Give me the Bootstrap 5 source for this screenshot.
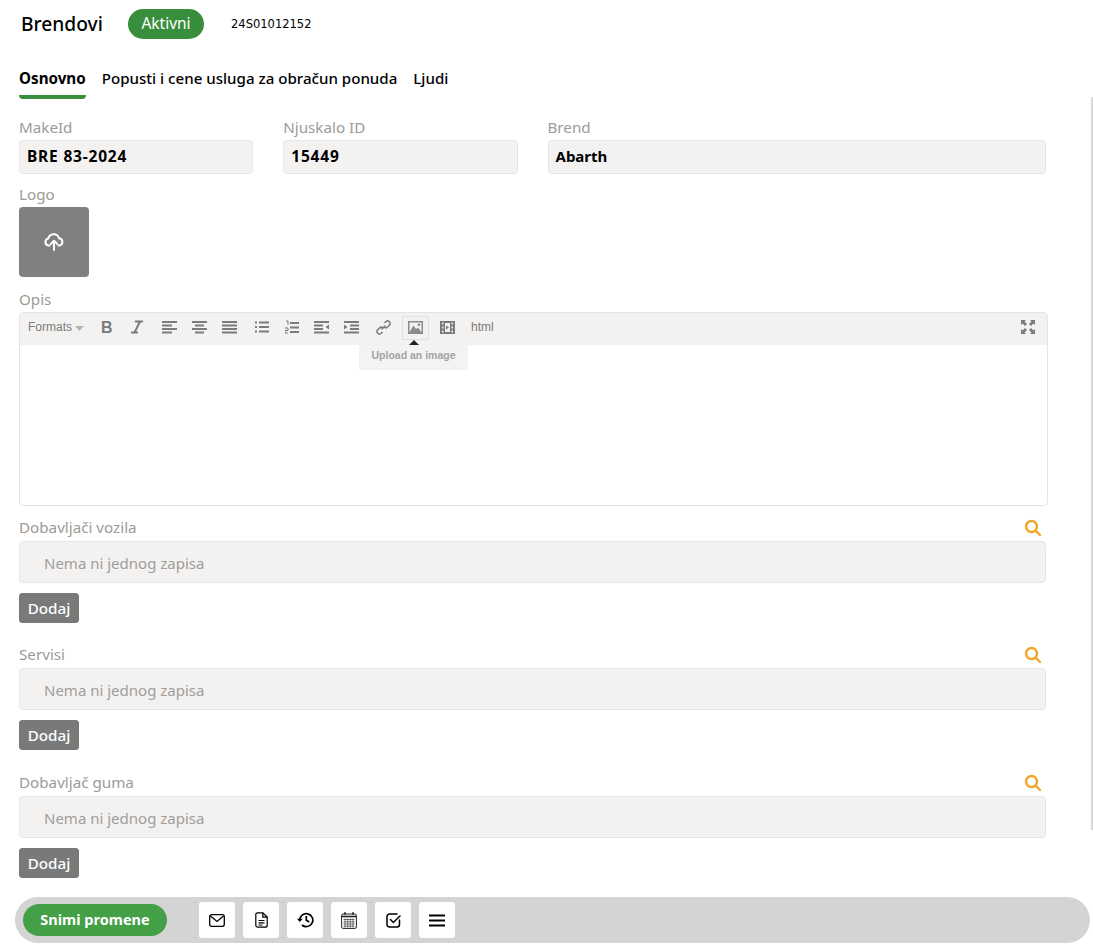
<!DOCTYPE html>
<html lang="hr"><head><meta charset="utf-8"><title>Brendovi</title>
<link rel="stylesheet" href="https://cdn.jsdelivr.net/npm/bootstrap@5.3.0/dist/css/bootstrap.min.css">
<style>
html,body{height:100%}
body{font-family:"Noto Sans","Open Sans",sans-serif;color:#000;overflow:hidden;background:#fff}
.shell{width:1093px;height:948px;position:relative}
.head{height:59px;padding:9px 0 0 21px;display:flex;align-items:flex-start}
.head-title{font-size:19.200px;line-height:29px;font-weight:500;width:107px}
.state{background:#388e3c;color:#fff;height:30px;width:76px;border-radius:15px;font-size:15.500px;line-height:29px;text-align:center}
.code{font-family:"DejaVu Sans",sans-serif;font-size:11.500px;line-height:30px;margin-left:27px}
.tabs-row{display:flex;gap:16px;padding-left:19px;height:40px}
.tab-item{font-size:15.100px;line-height:22px;padding-top:8px;font-weight:500;color:#000;text-decoration:none;height:40px}
.tab-item.on{font-size:15.200px;font-weight:700;border-bottom:4px solid #388e3c;border-radius:0 0 4px 4px}
.scroller{position:absolute;left:1091px;top:97px;width:3px;height:733px;background:#d8d8d8}
.form-area{padding:18px 0 0 4px;width:1061px}
.fields{--bs-gutter-x:30px;--bs-gutter-y:0;margin:0;width:1057px}
.lbl{color:#9d9a97;font-size:15.200px;line-height:20px;height:23px;display:block;font-weight:400}
.val{background:#f3f2f1;border:1px solid #e8e6e4;border-radius:4px;height:34px;font-weight:700;font-size:15.500px;line-height:31px;padding:0 7px;letter-spacing:.8px}
.val.val-name{font-size:15px;letter-spacing:0}
.block{margin-left:15px}
.gap-logo{margin-top:10px}
.gap-opis{margin-top:12px}
.gap-a{margin-top:9px}
.gap-b{margin-top:19px}
.gap-c{margin-top:20px}
.logo-box{width:70px;height:70px;background:#808080;border-radius:4px;display:flex;align-items:center;justify-content:center}
.editor{width:1029px;height:194px;border:1px solid #e6e4e2;border-radius:4px;position:relative}
.tbar{height:32px;background:#f3f2f1;display:flex;align-items:center;font-family:"Liberation Sans",sans-serif;font-size:12px;color:#7b7b7b;position:relative}
.tbar svg{position:absolute;top:7px;left:0}
.tbar span{position:absolute;top:7px;line-height:14px}
.tbar .bold-b{left:81px;top:6px;font-size:16px;font-weight:700;line-height:18px}
.img-on{position:absolute;left:382px;top:3px;width:27px;height:24px;border:1px solid #e0dfde;border-radius:2px}
.tipbox{position:absolute;left:339px;top:32px;width:109px;height:25px;background:#f4f3f3;color:#a3a3a3;font:700 10.500px/21px "Liberation Sans",sans-serif;text-align:center}
.tiparrow{position:absolute;left:389px;top:27px;width:0;height:0;border-left:5px solid transparent;border-right:5px solid transparent;border-bottom:5px solid #222}
.lookup{width:1027px;height:42px;background:#f3f2f1;border:1px solid #e8e6e4;border-radius:4px;color:#a09d9a;font-size:15px;line-height:43px;padding-left:24px}
.lookup-head{width:1027px;display:flex;justify-content:space-between;align-items:center;height:26px;padding-right:4px}
.add-btn{--bs-btn-bg:#797979;--bs-btn-color:#fff;--bs-btn-border-color:#797979;--bs-btn-hover-bg:#797979;--bs-btn-hover-color:#fff;--bs-btn-padding-x:0;--bs-btn-padding-y:0;--bs-btn-font-size:15.200px;--bs-btn-font-weight:500;--bs-btn-border-radius:3px;width:60px;height:30px;line-height:27px;margin-top:10px;display:block}
.bar{position:absolute;left:15px;top:897px;width:1075px;height:46px;background:#d4d4d4;border-radius:23px;display:flex;align-items:center;padding-left:8px}
.save{background:#43a047;color:#fff;width:144px;height:32px;border-radius:16px;border:0;font-weight:700;font-size:14.500px;line-height:27px;padding:0 0 2px;margin-right:32px}
.ico{width:36px;height:36px;background:#fff;border:0;border-radius:3px;padding:0;margin-right:8px;display:flex;align-items:center;justify-content:center}
</style></head><body>
<div class="shell">
<div class="head"><div class="head-title">Brendovi</div><div class="state">Aktivni</div><div class="code">24S01012152</div></div>
<nav class="tabs-row"><a class="tab-item on" href="#">Osnovno</a><a class="tab-item" href="#">Popusti i cene usluga za obračun ponuda</a><a class="tab-item" href="#">Ljudi</a></nav>
<div class="scroller"></div>
<div class="form-area">
<div class="row fields">
<div class="col-3"><label class="lbl">MakeId</label><div class="val">BRE 83-2024</div></div>
<div class="col-3"><label class="lbl">Njuskalo ID</label><div class="val">15449</div></div>
<div class="col-6"><label class="lbl">Brend</label><div class="val val-name">Abarth</div></div>
</div>
<div class="block gap-logo"><label class="lbl">Logo</label>
<div class="logo-box"><svg width="20" height="18" viewBox="0 0 20 18" fill="none" stroke="#fff" stroke-width="2" stroke-linecap="round" stroke-linejoin="round"><path d="M5.500 12.500H4.500A3.500 3.500 0 0 1 4.300 5.600 5.500 5.500 0 0 1 15 5.200 3.700 3.700 0 0 1 15.500 12.500H14.500"/><path d="M10 17V8M6.800 11 10 7.800 13.200 11"/></svg></div></div>
<div class="block gap-opis"><label class="lbl">Opis</label>
<div class="editor">
<div class="tbar">
<span style="left:8px">Formats</span><svg style="left:55px;top:13px" width="9" height="5"><path d="M0 0h9L4.500 5z" fill="#b5b5b5"/></svg>
<span class="bold-b">B</span>
<svg style="left:110px" width="14" height="14" viewBox="0 0 14 14"><path d="M5 1.500h8M1 12.500h7M10 1.500 4.500 12.500" stroke="#7b7b7b" stroke-width="2" fill="none"/></svg>
<svg style="left:142px" width="16" height="14"><path d="M0 2h15M0 5.500h10M0 9h15M0 12.500h10" stroke="#7b7b7b" stroke-width="2"/></svg>
<svg style="left:172px" width="16" height="14"><path d="M0 2h15M3 5.500h9M0 9h15M3 12.500h9" stroke="#7b7b7b" stroke-width="2"/></svg>
<svg style="left:202px" width="16" height="14"><path d="M0 2h15M0 5.500h15M0 9h15M0 12.500h15" stroke="#7b7b7b" stroke-width="2"/></svg>
<svg style="left:235px" width="15" height="14"><path d="M0 2.500h2M4 2.500h10M0 7h2M4 7h10M0 11.500h2M4 11.500h10" stroke="#7b7b7b" stroke-width="2"/></svg>
<svg style="left:265px" width="15" height="15"><path d="M5 3h9M5 7.500h9M5 12h9" stroke="#7b7b7b" stroke-width="2"/><path d="M1 1h2v4M0 8h3v2.500H0V13h3" stroke="#7b7b7b" fill="none"/></svg>
<svg style="left:294px" width="16" height="14"><path d="M0 2h15M0 5.500h9M0 9h9M0 12.500h15" stroke="#7b7b7b" stroke-width="2"/><path d="M15 4.500v5L11.500 7z" fill="#7b7b7b"/></svg>
<svg style="left:324px" width="16" height="14"><path d="M0 2h15M6 5.500h9M6 9h9M0 12.500h15" stroke="#7b7b7b" stroke-width="2"/><path d="M0 4.500v5L3.500 7z" fill="#7b7b7b"/></svg>
<svg style="left:356px" width="15" height="15" viewBox="0 0 15 15" fill="none" stroke="#7b7b7b" stroke-width="1.500"><path d="M8.500 3 10 1.500a2.500 2.500 0 0 1 3.500 3.500L11.500 7a2.500 2.500 0 0 1-3.500 0M6.500 12 5 13.500A2.500 2.500 0 0 1 1.500 10L3.500 8a2.500 2.500 0 0 1 3.500 0M5.500 9.500l4-4"/></svg>
<div class="img-on"></div>
<svg style="left:388px;top:8px" width="15" height="13"><rect x=".75" y=".75" width="13.500" height="11.500" fill="#f3f2f1" stroke="#8a8a8a" stroke-width="1.500"/><path d="M1 12 5.500 4.500 8 8 10 6.500 14 12z" fill="#8a8a8a"/><circle cx="11" cy="3.700" r="1.300" fill="#8a8a8a"/></svg>
<svg style="left:420px;top:8px" width="15" height="13"><path d="M0 0h15v13H0z" fill="#7b7b7b"/><path d="M2 1.500h1.500v2H2zM2 5.500h1.500v2H2zM2 9.500h1.500v2H2zM11.500 1.500H13v2h-1.500zM11.500 5.500H13v2h-1.500zM11.500 9.500H13v2h-1.500z" fill="#f3f2f1"/><path d="M5 2h5v9H5z" fill="#f3f2f1"/><path d="M6 4.500v4L9 6.500z" fill="#7b7b7b"/></svg>
<span style="left:451px">html</span>
<svg style="left:1001px;top:7px" width="14" height="14" viewBox="0 0 14 14"><path d="M0 0h5L3.500 1.500 6 4 4 6 1.500 3.500 0 5zM14 0v5l-1.500-1.500L10 6 8 4l2.500-2.500L9 0zM14 14H9l1.500-1.500L8 10l2-2 2.500 2.500L14 9zM0 14V9l1.500 1.500L4 8l2 2-2.500 2.500L5 14z" fill="#7b7b7b"/></svg>
</div>
<div class="tiparrow"></div><div class="tipbox">Upload an image</div>
</div></div>
<div class="block gap-a">
<div class="lookup-head"><label class="lbl">Dobavljači vozila</label><svg width="18" height="18" viewBox="0 0 18 18" fill="none" stroke="#f1a62b" stroke-width="2.400" stroke-linecap="round"><circle cx="7.500" cy="7.500" r="5.500"/><path d="M11.800 11.800 16 16"/></svg></div>
<div class="lookup">Nema ni jednog zapisa</div><button class="btn add-btn">Dodaj</button></div>
<div class="block gap-b">
<div class="lookup-head"><label class="lbl">Servisi</label><svg width="18" height="18" viewBox="0 0 18 18" fill="none" stroke="#f1a62b" stroke-width="2.400" stroke-linecap="round"><circle cx="7.500" cy="7.500" r="5.500"/><path d="M11.800 11.800 16 16"/></svg></div>
<div class="lookup">Nema ni jednog zapisa</div><button class="btn add-btn">Dodaj</button></div>
<div class="block gap-c">
<div class="lookup-head"><label class="lbl">Dobavljač guma</label><svg width="18" height="18" viewBox="0 0 18 18" fill="none" stroke="#f1a62b" stroke-width="2.400" stroke-linecap="round"><circle cx="7.500" cy="7.500" r="5.500"/><path d="M11.800 11.800 16 16"/></svg></div>
<div class="lookup">Nema ni jednog zapisa</div><button class="btn add-btn">Dodaj</button></div>
</div>
<div class="bar">
<button class="save">Snimi promene</button>
<button class="ico"><svg width="16" height="13" viewBox="0 0 16 13" fill="none" stroke="#000" stroke-width="1.300"><rect x=".7" y=".7" width="14.600" height="11.600" rx="2"/><path d="M1.500 2 8 7.500 14.500 2"/></svg></button>
<button class="ico"><svg width="13" height="16" viewBox="0 0 13 16" fill="none" stroke="#000" stroke-width="1.200" stroke-linejoin="round"><path d="M2.500.8H8L12.200 5v8.200a2 2 0 0 1-2 2H2.800a2 2 0 0 1-2-2V2.500A1.700 1.700 0 0 1 2.500.8zM7.800 1v4.200h4.200M3.500 8.500h6M3.500 10.800h6M3.500 13h4"/></svg></button>
<button class="ico"><svg width="17" height="16" viewBox="0 0 17 16" fill="none" stroke="#000" stroke-width="1.700"><path d="M2.800 8A6.500 6.500 0 1 1 5 13"/><path d="M0 6.800 2.800 10l2.900-3.200z" fill="#000" stroke="none"/><path d="M9.300 4v4.300l3 1.700"/></svg></button>
<button class="ico"><svg width="16" height="17" viewBox="0 0 16 17" fill="none" stroke="#222" stroke-width="1"><rect x=".6" y="2" width="14.800" height="14.400" rx="1.500"/><path d="M.6 4.500h14.800" stroke-width="1.600"/><path d="M4 0v3M12 0v3" stroke-width="1.300"/><path d="M2.500 7.500h11M2.500 9.800h11M2.500 12h11M2.500 14.200h11M4 6.500v9M6.700 6.500v9M9.300 6.500v9M12 6.500v9" stroke-width=".6"/></svg></button>
<button class="ico"><svg width="15" height="15" viewBox="0 0 15 15" fill="none" stroke="#000" stroke-width="1.500" stroke-linecap="round"><path d="M13.500 7v4.500a2.500 2.500 0 0 1-2.500 2.500H3.500A2.500 2.500 0 0 1 1 11.500V3.500A2.500 2.500 0 0 1 3.500 1H11"/><path d="M4.500 6.500 7.300 9.500 14 3"/></svg></button>
<button class="ico"><svg width="16" height="13" viewBox="0 0 16 13" stroke="#000" stroke-width="2"><path d="M0 1.500h16M0 6.500h16M0 11.500h16"/></svg></button>
</div>
</div>
<script src="https://cdn.jsdelivr.net/npm/bootstrap@5.3.0/dist/js/bootstrap.bundle.min.js"></script>
</body></html>
